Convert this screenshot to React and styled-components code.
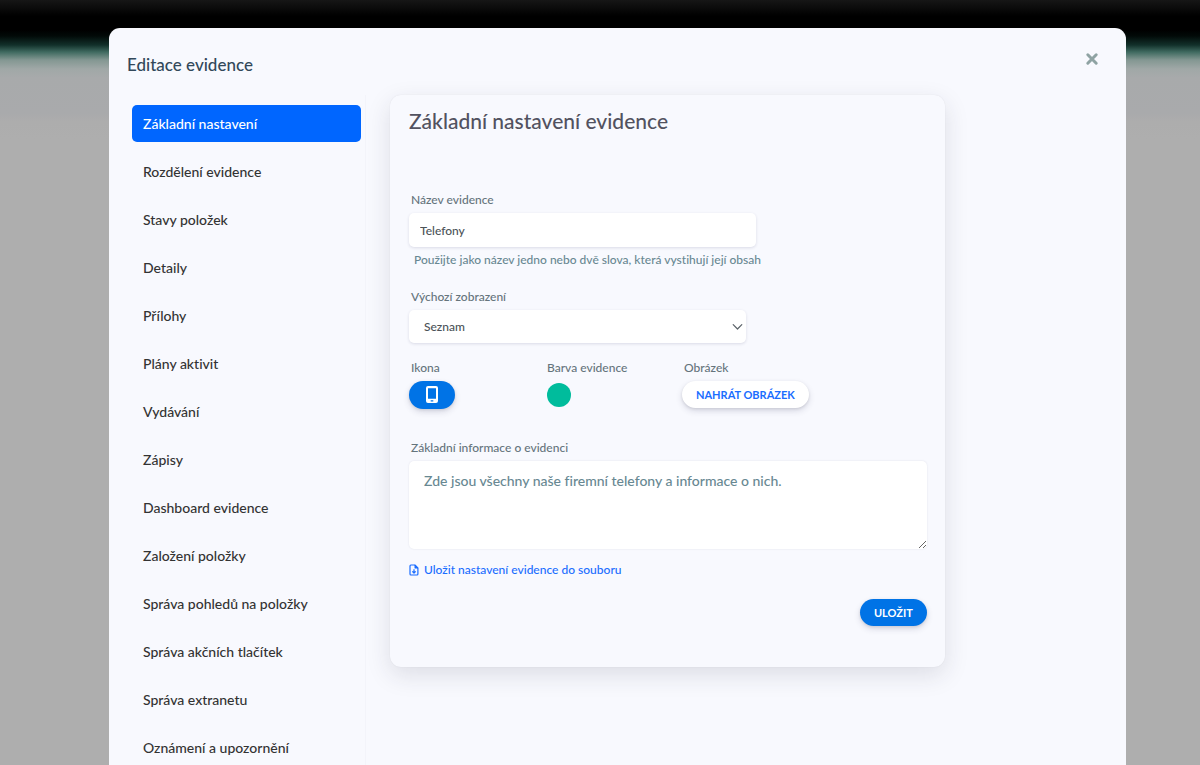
import React from "react";
import styled, { createGlobalStyle } from "styled-components";

const GlobalStyle = createGlobalStyle`
  *, *::before, *::after { box-sizing: border-box; }
  body {
    margin: 0;
    font-family: Lato, "Open Sans", sans-serif;
    font-variant-ligatures: none;
  }
  button, input, select, textarea { font-family: inherit; font-variant-ligatures: inherit; }
`;

const Overlay = styled.div`
  height: 100vh;
  padding: 28px 74px 0 109px;
  overflow-y: auto;
  scrollbar-width: none;
  background: linear-gradient(
    #161616 0, #000 16px, #000 30px, #020a08 36px, #12302a 45px, #3f6a60 52px,
    #839792 60px, #a0a8a7 69px, #a8aaab 78px, #a9aaac 114px, #adadad 122px, #aeaeae 140px
  );
`;

const Modal = styled.section`
  min-height: 100%;
  background: #f8f9fe;
  border-radius: 11px 11px 0 0;
`;

const Header = styled.header`
  display: flex;
  justify-content: space-between;
  align-items: flex-start;
  height: 67px;
  padding: 24px 27px 0 18px;
`;

const ModalTitle = styled.h1`
  margin: 0;
  font-size: 17px;
  line-height: 26px;
  font-weight: 500;
  color: #32485a;
`;

const CloseButton = styled.button`
  display: flex;
  padding: 0;
  border: 0;
  background: none;
  color: #8fa3a3;
  cursor: pointer;
`;

const Body = styled.div`
  display: grid;
  grid-template-columns: 257px 1fr;
`;

const Nav = styled.nav`
  display: flex;
  flex-direction: column;
  gap: 11px;
  padding: 10px 4px 0 23px;
  border-right: 1px solid #f3f4fa;
`;

const NavItem = styled.a`
  height: 37px;
  padding: 0 11px;
  border-radius: 5px;
  font-size: 14px;
  line-height: 38px;
  font-weight: 500;
  text-decoration: none;
  color: ${(p) => (p.$active ? "#fff" : "#333")};
  background: ${(p) => (p.$active ? "#0066ff" : "transparent")};
`;

const Card = styled.form`
  width: 73%;
  align-self: start;
  margin-left: 24px;
  padding: 12px 18px 41px 19px;
  border-radius: 11px;
  background: #f8f9fe;
  box-shadow: 0 0 1px rgba(40, 40, 60, 0.12), 0 8px 24px rgba(40, 40, 60, 0.13);
`;

const CardTitle = styled.h2`
  margin: 0 0 57px;
  font-size: 21px;
  line-height: 28px;
  font-weight: 500;
  color: #525260;
`;

const Field = styled.div`
  display: flex;
  flex-direction: column;
  align-items: flex-start;
  margin-bottom: ${(p) => p.$gap}px;
`;

const Label = styled.label`
  padding-left: 2px;
  margin-bottom: 5px;
  font-size: 12px;
  line-height: 16px;
  font-weight: 500;
  color: #65747c;
`;

const control = `
  border: 0;
  border-radius: 5px;
  background-color: #fff;
  box-shadow: 0 1px 3px rgba(50, 50, 93, 0.15);
  outline: none;
`;

const TextInput = styled.input`
  ${control}
  width: 67%;
  height: 34px;
  padding: 0 11px;
  font-size: 12px;
  font-weight: 500;
  color: #4c5358;
`;

const Hint = styled.p`
  margin: 5px 0 0 5px;
  font-size: 12px;
  line-height: 16px;
  font-weight: 500;
  color: #688892;
`;

const SelectWrap = styled.div`
  display: grid;
  align-items: center;
  width: 65%;
  color: #5a6268;

  > * { grid-area: 1 / 1; }
  > svg { justify-self: end; margin-right: 3px; pointer-events: none; }
`;

const Select = styled.select`
  ${control}
  appearance: none;
  width: 100%;
  height: 33px;
  padding: 0 15px;
  font-size: 12px;
  font-weight: 500;
  color: #4c5358;
`;

const Options = styled.div`
  display: grid;
  grid-template-columns: 136px 137px 1fr;
`;

const Pill = styled.button`
  display: flex;
  align-items: center;
  justify-content: center;
  height: ${(p) => (p.$icon ? 28 : 27)}px;
  padding: 0 ${(p) => (p.$icon ? 15 : 14)}px;
  border: 0;
  border-radius: 14px;
  font-size: 11px;
  font-weight: 700;
  text-transform: uppercase;
  color: ${(p) => (p.$light ? "#1a6dff" : "#fff")};
  background: ${(p) => (p.$light ? "#fff" : "#0073e6")};
  box-shadow: 0 3px 6px rgba(50, 50, 93, 0.16), 0 1px 3px rgba(0, 0, 0, 0.1);
  cursor: pointer;
`;

const Swatch = styled.button`
  width: 24px;
  height: 24px;
  margin: 2px 0 0 2px;
  padding: 0;
  border: 0;
  border-radius: 50%;
  background: #00bc9c;
  cursor: pointer;
`;

const TextArea = styled.textarea`
  ${control}
  box-shadow: 0 0 2px rgba(50, 50, 93, 0.12);
  display: block;
  width: 100%;
  height: 88px;
  padding: 10px 15px;
  resize: both;
  font-size: 14px;
  line-height: 20px;
  font-weight: 500;
  color: #688892;
`;

const ExportLink = styled.a`
  display: flex;
  align-items: center;
  gap: 5px;
  margin-bottom: 21px;
  font-size: 12px;
  line-height: 16px;
  font-weight: 500;
  text-decoration: none;
  color: #1a6dff;
`;

const Actions = styled.div`
  display: flex;
  justify-content: flex-end;
`;

const sections = [
  "Základní nastavení",
  "Rozdělení evidence",
  "Stavy položek",
  "Detaily",
  "Přílohy",
  "Plány aktivit",
  "Vydávání",
  "Zápisy",
  "Dashboard evidence",
  "Založení položky",
  "Správa pohledů na položky",
  "Správa akčních tlačítek",
  "Správa extranetu",
  "Oznámení a upozornění",
];

const CloseIcon = () => (
  <svg width="14" height="14" viewBox="0 0 14 14" fill="none" stroke="currentColor" strokeWidth="3" strokeLinecap="round">
    <path d="M2.8 2.8l8.4 8.4M11.2 2.8l-8.4 8.4" />
  </svg>
);

const PhoneIcon = () => (
  <svg width="16" height="20" viewBox="0 0 16 20">
    <path
      fill="currentColor"
      fillRule="evenodd"
      d="M4 1h8a2 2 0 0 1 2 2v13a2 2 0 0 1-2 2H4a2 2 0 0 1-2-2V3a2 2 0 0 1 2-2zM4 3.2v10.6h8V3.2zM6.7 15.2v1.2h2.6v-1.2z"
    />
  </svg>
);

const ChevronIcon = () => (
  <svg width="11" height="8" viewBox="0 0 11 8" fill="none" stroke="currentColor" strokeWidth="1.2" strokeLinecap="round" strokeLinejoin="round">
    <path d="M1.2 1.7l4.3 4.3 4.3-4.3" />
  </svg>
);

const FileDownIcon = () => (
  <svg width="10" height="12" viewBox="0 0 10 12" fill="none" stroke="currentColor" strokeWidth="1.2" strokeLinejoin="round">
    <path d="M1.9 1h4l3 3v6.1a.9.9 0 0 1-.9.9H1.9a.9.9 0 0 1-.9-.9V1.9A.9.9 0 0 1 1.9 1z" />
    <path d="M5.8 1v3.2H9z" fill="currentColor" strokeWidth=".5" />
    <path d="M5 5.3v3.6M3.3 7.3L5 9l1.7-1.7" />
  </svg>
);

export default function App() {
  return (
    <>
      <GlobalStyle />
      <Overlay>
        <Modal role="dialog" aria-labelledby="modal-title">
          <Header>
            <ModalTitle id="modal-title">Editace evidence</ModalTitle>
            <CloseButton type="button" aria-label="Zavřít">
              <CloseIcon />
            </CloseButton>
          </Header>
          <Body>
            <Nav>
              {sections.map((name, i) => (
                <NavItem key={name} href="#" $active={i === 0}>
                  {name}
                </NavItem>
              ))}
            </Nav>
            <Card onSubmit={(e) => e.preventDefault()}>
              <CardTitle>Základní nastavení evidence</CardTitle>
              <Field $gap={21}>
                <Label htmlFor="name">Název evidence</Label>
                <TextInput id="name" type="text" defaultValue="Telefony" />
                <Hint>Použijte jako název jedno nebo dvě slova, která vystihují její obsah</Hint>
              </Field>
              <Field $gap={17}>
                <Label htmlFor="view">Výchozí zobrazení</Label>
                <SelectWrap>
                  <Select id="view" defaultValue="Seznam">
                    <option>Seznam</option>
                  </Select>
                  <ChevronIcon />
                </SelectWrap>
              </Field>
              <Options>
                <Field $gap={31}>
                  <Label htmlFor="icon">Ikona</Label>
                  <Pill id="icon" type="button" $icon>
                    <PhoneIcon />
                  </Pill>
                </Field>
                <Field $gap={31}>
                  <Label htmlFor="color">Barva evidence</Label>
                  <Swatch id="color" type="button" />
                </Field>
                <Field $gap={31}>
                  <Label htmlFor="image">Obrázek</Label>
                  <Pill id="image" type="button" $light>
                    Nahrát obrázek
                  </Pill>
                </Field>
              </Options>
              <Field $gap={13}>
                <Label htmlFor="info">Základní informace o evidenci</Label>
                <TextArea id="info" defaultValue="Zde jsou všechny naše firemní telefony a informace o nich." />
              </Field>
              <ExportLink href="#">
                <FileDownIcon />
                Uložit nastavení evidence do souboru
              </ExportLink>
              <Actions>
                <Pill type="submit">Uložit</Pill>
              </Actions>
            </Card>
          </Body>
        </Modal>
      </Overlay>
    </>
  );
}
